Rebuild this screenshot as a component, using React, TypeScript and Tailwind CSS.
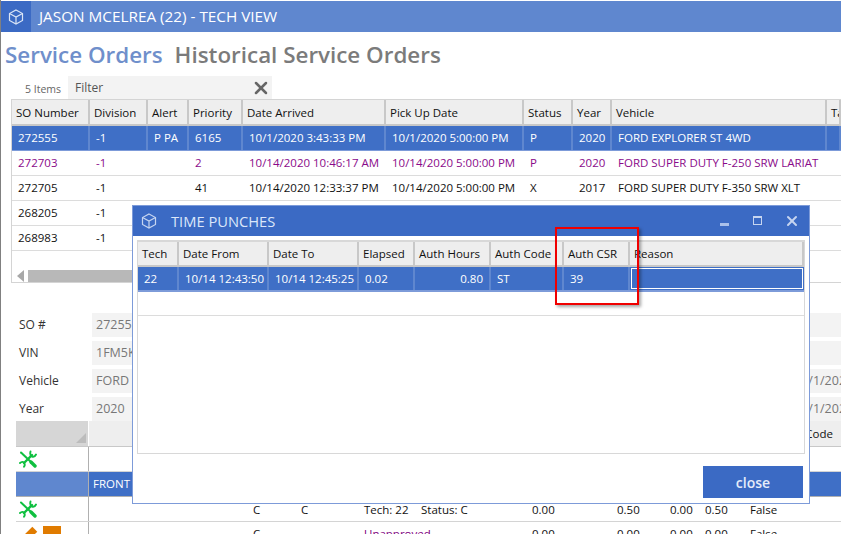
import React from 'react';
import { X } from 'lucide-react';

const font = "font-['Open_Sans','Noto_Sans',sans-serif]";

function Cube({ className }: { className?: string }) {
  return (
    <svg viewBox="0 0 16 16" className={className} fill="none" stroke="currentColor" strokeWidth="1.2">
      <path d="M8 1 L14.5 4.5 V11.5 L8 15 L1.5 11.5 V4.5 Z" />
      <path d="M1.5 4.5 L8 8 L14.5 4.5 M8 8 V15" />
    </svg>
  );
}

function Tools() {
  return (
    <svg viewBox="0 0 18 18" className="w-[18px] h-[18px]" fill="none" stroke="#0fc040" strokeLinecap="round">
      {/* screwdriver */}
      <path d="M2 2.5 L12 12" strokeWidth="2" />
      <path d="M12 12 L16 16" strokeWidth="3.4" />
      {/* double ended wrench */}
      <path d="M5 13 L13 5" strokeWidth="2.4" />
      <path d="M11.5 1.5 Q10.5 5.5 13 6.5 Q15.5 7.5 17 4.5" strokeWidth="1.9" />
      <path d="M1 13 Q3.5 10.8 5 12.8 Q6.5 14.5 5 16.8" strokeWidth="1.9" />
    </svg>
  );
}

const columns = [
  { label: 'SO Number', w: 'w-[78px]' },
  { label: 'Division', w: 'w-[58px]' },
  { label: 'Alert', w: 'w-[41px]' },
  { label: 'Priority', w: 'w-[54px]' },
  { label: 'Date Arrived', w: 'w-[143px]' },
  { label: 'Pick Up Date', w: 'w-[138px]' },
  { label: 'Status', w: 'w-[49px]' },
  { label: 'Year', w: 'w-[39px]' },
  { label: 'Vehicle', w: 'w-[215px]' },
  { label: 'Ta', w: 'flex-1' },
];

const orders = [
  ['272555', '-1', 'P PA', '6165', '10/1/2020 3:43:33 PM', '10/1/2020 5:00:00 PM', 'P', '2020', 'FORD EXPLORER ST 4WD', ''],
  ['272703', '-1', '', '2', '10/14/2020 10:46:17 AM', '10/14/2020 5:00:00 PM', 'P', '2020', 'FORD SUPER DUTY F-250 SRW LARIAT', ''],
  ['272705', '-1', '', '41', '10/14/2020 12:33:37 PM', '10/14/2020 5:00:00 PM', 'X', '2017', 'FORD SUPER DUTY F-350 SRW XLT', ''],
  ['268205', '-1', '', '', '', '', '', '', '', ''],
  ['268983', '-1', '', '', '', '', '', '', '', ''],
];

const punchCols = [
  { label: 'Tech', w: 'w-[41px]' },
  { label: 'Date From', w: 'w-[90px]' },
  { label: 'Date To', w: 'w-[90px]' },
  { label: 'Elapsed', w: 'w-[56px]' },
  { label: 'Auth Hours', w: 'w-[76px]' },
  { label: 'Auth Code', w: 'w-[73px]' },
  { label: 'Auth CSR', w: 'w-[66px]' },
  { label: 'Reason', w: 'flex-1' },
];

const punch = ['22', '10/14 12:43:50', '10/14 12:45:25', '0.02', '0.80', 'ST', '39'];

const fields = [
  ['SO #', '272555', ''],
  ['VIN', '1FM5K8', ''],
  ['Vehicle', 'FORD EXPLORER', '10/1/2020'],
  ['Year', '2020', '10/1/2020'],
];

export default function App() {
  return (
    <div className={`${font} relative w-[841px] h-[534px] overflow-hidden bg-white border-l border-[#808080] text-[11.5px] text-[#111]`}>
      {/* Title bar */}
      <div className="h-[31px] mt-px flex items-center bg-[#5f87cf] text-white">
        <div className="w-[30px] h-full flex items-center justify-center bg-[#3b6ac4]">
          <Cube className="w-[16px] h-[16px] text-[#dbe5f6]" />
        </div>
        <span className="ml-2 text-[15.3px]">JASON MCELREA (22) - TECH VIEW</span>
      </div>

      <div className="flex gap-3 pl-1 pt-[8px] h-[44px] text-[22.4px] font-semibold leading-[30px]">
        <span className="text-[#6f8fcb]">Service Orders</span>
        <span className="text-[#7b7b7b]">Historical Service Orders</span>
      </div>

      {/* Filter */}
      <div className="flex h-[23px] items-end">
        <span className="ml-6 w-[43px] text-[10.5px] leading-[19px] text-[#666]">5 Items</span>
        <div className="w-[204px] h-[23px] bg-[#f3f3f3] flex items-center justify-between pl-[7px] pr-px text-[12px] text-[#555]">
          <span>Filter</span>
          <X size={20} strokeWidth={3} className="text-[#666]" />
        </div>
      </div>

      {/* Service orders grid */}
      <div className="ml-[10px] h-[184px] border border-[#d4d4d4] border-r-0">
        <div className="flex h-[26px] bg-[#eeeeee] border-b-2 border-[#c8c8c8]">
          {columns.map((c) => (
            <div key={c.label} className={`${c.w} pl-[4px] leading-[26px] border-r-2 border-[#c8c8c8] whitespace-nowrap overflow-hidden`}>{c.label}</div>
          ))}
        </div>
        {orders.map((row, i) => (
          <div
            key={row[0]}
            className={`flex h-[25px] border-b ${i === 0 ? 'bg-[#3f6fc6] text-white border-[#7d9bd9]' : 'border-[#dcdcdc]'} ${i === 1 ? 'text-[#8a0a8a]' : ''}`}
          >
            {columns.map((c, j) => (
              <div key={c.label} className={`${c.w} pl-[6px] leading-[24px] whitespace-nowrap overflow-hidden ${i === 0 ? 'border-r-2 border-[#5f87cf]' : ''}`}>{row[j]}</div>
            ))}
          </div>
        ))}
        <div className="flex items-center mt-[18px] pl-[5px] h-[13px]">
          <span className="w-0 h-0 border-y-[6px] border-y-transparent border-r-[7px] border-r-[#a8a8a8] mr-[4px]" />
          <div className="w-[760px] h-[12px] bg-[#b8b8b8]" />
        </div>
      </div>

      {/* Detail form */}
      <div className="mt-[30px] flex flex-col gap-1">
        {fields.map(([label, value, right]) => (
          <div key={label} className="flex h-[24px] items-center">
            <span className="ml-[18px] w-[73px] text-[12px] text-[#333]">{label}</span>
            <div className="w-[600px] h-[24px] bg-[#f3f3f3] pl-1 leading-[24px] text-[#777] text-[12.5px]">{value}</div>
            <div className="ml-[10px] flex-1 h-[24px] bg-[#f3f3f3] pl-[92px] leading-[24px] text-[#777] text-[12.5px] whitespace-nowrap overflow-hidden">{right}</div>
          </div>
        ))}
      </div>

      {/* Lines grid */}
      <div className="ml-[15px]">
        <div className="flex h-[26px] border-b border-[#c8c8c8]">
          <div className="w-[72px] bg-[#d6d6d6] relative">
            <span className="absolute right-[2px] bottom-[3px] w-0 h-0 border-l-[10px] border-l-transparent border-b-[10px] border-b-[#bcbcbc]" />
          </div>
          <div className="flex-1 ml-px bg-[#eeeeee] text-right pr-[8px] leading-[26px]">Code</div>
        </div>
        <div className="flex h-[25px] border-b border-[#d4d4d4]">
          <div className="w-[73px] border-r border-[#b0b0b0] pl-[3px] flex items-center"><Tools /></div>
        </div>
        <div className="flex h-[25px] bg-[#3f6fc6] text-white border-b border-[#b0b0b0]">
          <div className="w-[73px] bg-[#5f87cf] border-r border-[#b0b0b0]" />
          <div className="pl-[4px] leading-[24px]">FRONT</div>
        </div>
        <div className="flex h-[25px] border-b border-[#d4d4d4] leading-[26px]">
          <div className="w-[73px] border-r border-[#b0b0b0] pl-[3px] flex items-center"><Tools /></div>
          <span className="ml-[164px] w-[48px]">C</span>
          <span className="w-[63px]">C</span>
          <span className="w-[57px]">Tech: 22</span>
          <span className="w-[111px]">Status: C</span>
          <span className="w-[85px]">0.00</span>
          <span className="w-[53px]">0.50</span>
          <span className="w-[35px]">0.00</span>
          <span className="w-[45px]">0.50</span>
          <span>False</span>
        </div>
        <div className="flex h-[25px] leading-[24px]">
          <div className="w-[73px] border-r border-[#b0b0b0] pl-[6px] pt-[4px] flex gap-[6px]">
            <span className="w-[15px] h-[7px] mt-[5px] bg-[#e07b00] -rotate-45" />
            <span className="w-[18px] h-[18px] bg-[#e07b00]" />
          </div>
          <span className="ml-[164px] w-[111px]">C</span>
          <span className="w-[168px] text-[#800080]">Unapproved</span>
          <span className="w-[85px]">0.00</span>
          <span className="w-[53px]">0.00</span>
          <span className="w-[35px]">0.00</span>
          <span className="w-[45px]">0.00</span>
          <span>False</span>
        </div>
      </div>

      {/* Time punches dialog */}
      <div className="absolute left-[131px] top-[205px] w-[678px] h-[299px] bg-white border border-[#7d9bd9] flex flex-col">
        <div className="h-[30px] bg-[#3b6ac4] flex items-center text-white shrink-0">
          <Cube className="ml-[8px] w-[16px] h-[16px] text-[#c6d5f0]" />
          <span className="ml-[14px] text-[14.7px] text-[#dbe7fa] flex-1">TIME PUNCHES</span>
          <span className="w-[9px] h-[3px] mt-[6px] bg-[#a9c0ea]" />
          <span className="ml-[24px] mb-px w-[9px] h-[9px] border border-t-2 border-[#c6d5f0]" />
          <X size={16} strokeWidth={3} className="ml-[22px] mr-[9px] text-[#c6d5f0]" />
        </div>
        <div className="mx-[4px] mt-[4px] h-[214px] border border-t-2 border-[#d8d8d8]">
          <div className="flex h-[25px] bg-[#eeeeee] border-b-2 border-[#c8c8c8]">
            {punchCols.map((c) => (
              <div key={c.label} className={`${c.w} px-[4px] leading-[23px] border-r-2 border-[#c8c8c8] whitespace-nowrap overflow-hidden`}>{c.label}</div>
            ))}
          </div>
          <div className="flex h-[25px] bg-[#3f6fc6] text-white border-b-2 border-[#7d9bd9]">
            {punch.map((v, i) => (
              <div key={i} className={`${punchCols[i].w} px-[6px] leading-[23px] border-r-2 border-[#5f87cf] whitespace-nowrap ${i === 4 ? 'text-right' : ''}`}>{v}</div>
            ))}
            <div className="flex-1 m-px border border-white" />
          </div>
          <div className="h-[24px] border-b border-[#dcdcdc]" />
        </div>
        <div className="flex justify-end pr-[6px] pt-[12px]">
          <button className="w-[100px] h-[32px] bg-[#3b6ac4] text-[#e4ecfa] text-[14px] font-semibold">close</button>
        </div>
      </div>

      {/* Red annotation */}
      <div className="absolute left-[554px] top-[227px] w-[84px] h-[78px] border-2 border-[#f00000] shadow-[2px_2px_3px_rgba(0,0,0,0.35)]" />
    </div>
  );
}
